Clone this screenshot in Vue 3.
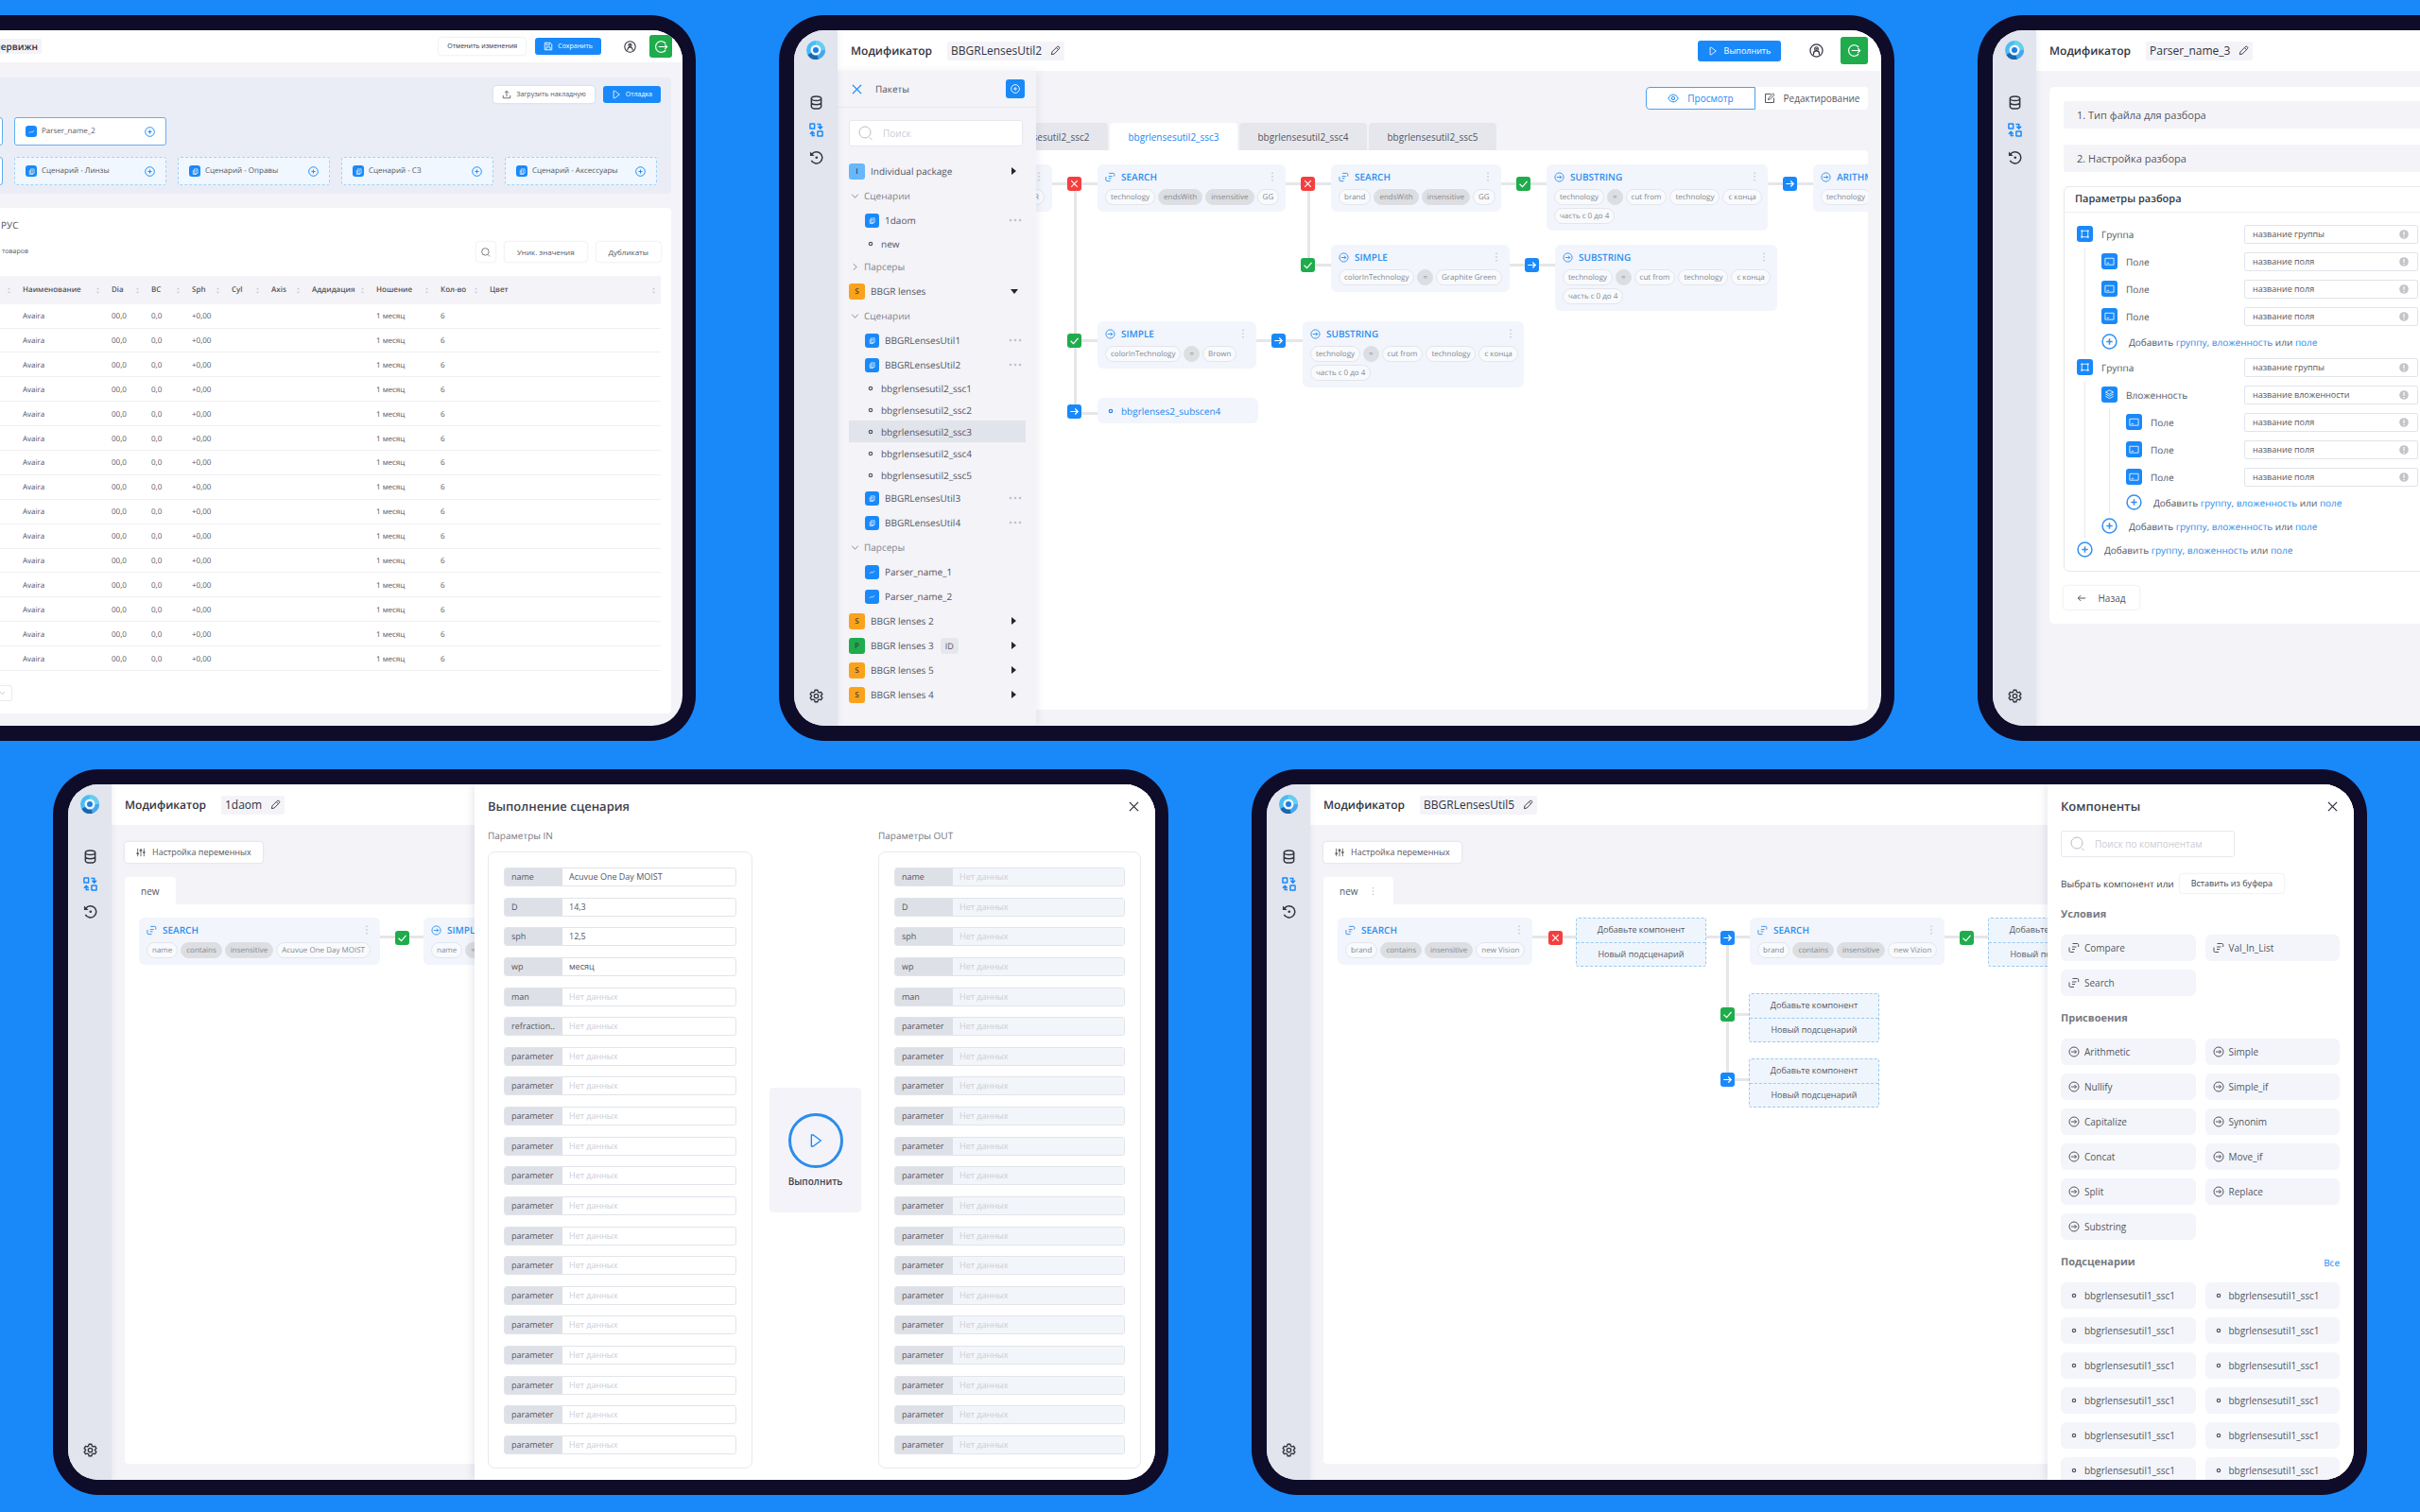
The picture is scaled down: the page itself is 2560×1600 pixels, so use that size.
<script setup>
const rows = [
  [{ id: 'invoice' }, { id: 'packages', name: 'BBGRLensesUtil2' }, { id: 'parser', name: 'Parser_name_3' }],
  [{ id: 'run', name: '1daom' }, { id: 'components', name: 'BBGRLensesUtil5' }],
]

const columns = [
  ['', 'auto'], ['Наименование', 94], ['Dia', 42], ['BC', 43], ['Sph', 42], ['Cyl', 42], ['Axis', 43],
  ['Аддидация', 68], ['Ношение', 68], ['Кол-во', 52], ['Цвет', 188],
]
const record = ['', 'Avaira', '00,0', '0,0', '+0,00', '', '', '', '1 месяц', '6', '']
const scenarioCards = ['Сценарий - Линзы', 'Сценарий - Оправы', 'Сценарий - СЗ', 'Сценарий - Аксессуары']

const tree = [
  { t: 'package', label: 'Individual package', letter: 'I', tone: 'sky' },
  { t: 'group', label: 'Сценарии', open: true },
  { t: 'scenario', label: '1daom', more: true },
  { t: 'sub', label: 'new' },
  { t: 'group', label: 'Парсеры' },
  { t: 'package', label: 'BBGR lenses', letter: 'S', tone: 'amber', open: true },
  { t: 'group', label: 'Сценарии', open: true },
  { t: 'scenario', label: 'BBGRLensesUtil1', more: true },
  { t: 'scenario', label: 'BBGRLensesUtil2', more: true },
  { t: 'sub', label: 'bbgrlensesutil2_ssc1' },
  { t: 'sub', label: 'bbgrlensesutil2_ssc2' },
  { t: 'sub', label: 'bbgrlensesutil2_ssc3', active: true },
  { t: 'sub', label: 'bbgrlensesutil2_ssc4' },
  { t: 'sub', label: 'bbgrlensesutil2_ssc5' },
  { t: 'scenario', label: 'BBGRLensesUtil3', more: true },
  { t: 'scenario', label: 'BBGRLensesUtil4', more: true },
  { t: 'group', label: 'Парсеры', open: true },
  { t: 'parser', label: 'Parser_name_1' },
  { t: 'parser', label: 'Parser_name_2' },
  { t: 'package', label: 'BBGR lenses 2', letter: 'S', tone: 'amber' },
  { t: 'package', label: 'BBGR lenses 3', letter: 'P', tone: 'green', tag: 'ID' },
  { t: 'package', label: 'BBGR lenses 5', letter: 'S', tone: 'amber' },
  { t: 'package', label: 'BBGR lenses 4', letter: 'S', tone: 'amber' },
]

const substring = [['technology', '*=', 'cut from', 'technology', 'с конца'], ['часть с 0 до 4']]
const boards = {
  packages: {
    tabs: [
      { label: 'bbgrlensesutil2_ssc1' },
      { label: 'bbgrlensesutil2_ssc2' },
      { label: 'bbgrlensesutil2_ssc3', active: true },
      { label: 'bbgrlensesutil2_ssc4' },
      { label: 'bbgrlensesutil2_ssc5' },
    ],
    lines: [
      [213, 34, 48, 3], [460, 34, 48, 3], [688, 34, 48, 3], [970, 34, 48, 3],
      [484, 120, 24, 3], [697, 120, 48, 3],
      [237, 200, 24, 3], [429, 200, 49, 3], [237, 277, 24, 3],
      [236, 34, 3, 244], [483, 34, 3, 88],
    ],
    nodes: [
      { x: 14, y: 15, w: 199, kind: 'link', title: 'SEARCH', end: true, pills: [['BBGR']] },
      { x: 261, y: 15, w: 199, kind: 'link', title: 'SEARCH', pills: [['technology', '*endsWith', '*insensitive', 'GG']] },
      { x: 508, y: 15, w: 180, kind: 'link', title: 'SEARCH', pills: [['brand', '*endsWith', '*insensitive', 'GG']] },
      { x: 736, y: 15, w: 234, kind: 'assign', title: 'SUBSTRING', pills: substring },
      { x: 1018, y: 15, w: 199, kind: 'assign', title: 'ARITHMETIC', pills: [['technology']] },
      { x: 508, y: 100, w: 189, kind: 'assign', title: 'SIMPLE', pills: [['colorInTechnology', '*=', 'Graphite Green']] },
      { x: 745, y: 100, w: 235, kind: 'assign', title: 'SUBSTRING', pills: substring },
      { x: 261, y: 181, w: 168, kind: 'assign', title: 'SIMPLE', pills: [['colorInTechnology', '*=', 'Brown']] },
      { x: 478, y: 181, w: 234, kind: 'assign', title: 'SUBSTRING', pills: substring },
    ],
    subs: [{ x: 261, y: 262, w: 170, label: 'bbgrlenses2_subscen4' }],
    slots: [],
    badges: [
      [229, 28, 'cross'], [476, 28, 'cross'], [704, 28, 'check'], [986, 28, 'arrow'],
      [476, 114, 'check'], [713, 114, 'arrow'],
      [229, 194, 'check'], [445, 194, 'arrow'], [229, 269, 'arrow'],
    ],
  },
  run: {
    settings: true,
    tabs: [{ label: 'new', small: true }],
    lines: [[270, 33, 46, 3]],
    nodes: [
      { x: 15, y: 14, w: 255, kind: 'link', title: 'SEARCH', pills: [['name', '*contains', '*insensitive', 'Acuvue One Day MOIST']] },
      { x: 316, y: 14, w: 199, kind: 'assign', title: 'SIMPLE', pills: [['name', '*=']] },
    ],
    subs: [],
    slots: [],
    badges: [[286, 28, 'check']],
  },
  components: {
    settings: true,
    tabs: [{ label: 'new', small: true, menu: true }],
    lines: [
      [221, 33, 46, 3], [405, 33, 46, 3], [657, 33, 46, 3], [427, 115, 23, 3], [427, 184, 23, 3], [426, 34, 3, 152],
    ],
    nodes: [
      { x: 15, y: 14, w: 206, kind: 'link', title: 'SEARCH', pills: [['brand', '*contains', '*insensitive', 'new Vision']] },
      { x: 451, y: 14, w: 206, kind: 'link', title: 'SEARCH', pills: [['brand', '*contains', '*insensitive', 'new Vizion']] },
    ],
    subs: [],
    slots: [[267, 14], [703, 14], [450, 94], [450, 163]],
    badges: [[238, 28, 'cross'], [420, 28, 'arrow'], [673, 28, 'check'], [420, 109, 'check'], [420, 178, 'arrow']],
  },
}

const fields = [
  { level: 0, kind: 'frame', label: 'Группа', value: 'название группы' },
  { level: 1, kind: 'field', label: 'Поле', value: 'название поля' },
  { level: 1, kind: 'field', label: 'Поле', value: 'название поля' },
  { level: 1, kind: 'field', label: 'Поле', value: 'название поля' },
  { level: 1, add: true },
  { level: 0, kind: 'frame', label: 'Группа', value: 'название группы' },
  { level: 1, kind: 'layers', label: 'Вложенность', value: 'название вложенности' },
  { level: 2, kind: 'field', label: 'Поле', value: 'название поля' },
  { level: 2, kind: 'field', label: 'Поле', value: 'название поля' },
  { level: 2, kind: 'field', label: 'Поле', value: 'название поля' },
  { level: 2, add: true },
  { level: 1, add: true },
  { level: 0, add: true },
]

const pad = (list) => [...list, ...Array(20 - list.length).fill(['parameter', ''])]
const paramsIn = pad([
  ['name', 'Acuvue One Day MOIST'], ['D', '14,3'], ['sph', '12,5'], ['wp', 'месяц'], ['man', ''], ['refraction..', ''],
])
const paramsOut = pad([['name', ''], ['D', ''], ['sph', ''], ['wp', ''], ['man', '']])

const library = [
  { title: 'Условия', icon: 'i-link', items: ['Compare', 'Val_In_List', 'Search'] },
  {
    title: 'Присвоения',
    icon: 'i-assign',
    items: ['Arithmetic', 'Simple', 'Nullify', 'Simple_if', 'Capitalize', 'Synonim', 'Concat', 'Move_if', 'Split', 'Replace', 'Substring'],
  },
  { title: 'Подсценарии', icon: 'i-dot', all: true, items: Array(12).fill('bbgrlensesutil1_ssc1') },
]
</script>

<template>
  <svg class="sprite" aria-hidden="true">
    <symbol id="i-logo" viewBox="0 0 20 20">
      <circle cx="10" cy="10" r="7" fill="none" stroke="#4bbcf5" stroke-width="6" />
      <path d="M10 3a7 7 0 0 1 7 7" fill="none" stroke="#63d0ee" stroke-width="6" />
      <path d="M17 10a7 7 0 0 1-6 7" fill="none" stroke="#48a6ee" stroke-width="6" />
      <path d="M12 17a7 7 0 0 1-8-3.500" fill="none" stroke="#1a67ad" stroke-width="6" />
      <circle cx="10" cy="10" r="5.500" fill="#eef6fd" />
      <circle cx="10" cy="10" r="3" fill="#1b7fe0" />
    </symbol>
    <symbol id="i-db" viewBox="0 0 16 16">
      <g fill="none" stroke="currentColor" stroke-width="1.600">
        <ellipse cx="8" cy="3.500" rx="5.500" ry="2.400" />
        <path d="M2.500 3.500v9c0 1.400 2.400 2.500 5.500 2.500s5.500-1.100 5.500-2.500v-9M2.500 8c0 1.300 2.400 2.300 5.500 2.300s5.500-1 5.500-2.300" />
      </g>
    </symbol>
    <symbol id="i-swap" viewBox="0 0 16 16">
      <g fill="none" stroke="currentColor" stroke-width="1.600">
        <rect x="1" y="1" width="5" height="5.500" rx=".5" />
        <rect x="9.500" y="9.500" width="5.500" height="5.500" rx=".5" />
        <path d="M9 1.500h3.500v4M10 4l2.500 2.500L15 4M6.500 14.500H3.500v-4M1 12.500L3.500 10 6 12.500" />
      </g>
    </symbol>
    <symbol id="i-history" viewBox="0 0 16 16">
      <path d="M3 4.500A6.500 6.500 0 1 1 2.500 11.500" fill="none" stroke="currentColor" stroke-width="1.600" />
      <path d="M1 1.500v5h5z" fill="currentColor" />
      <circle cx="8.300" cy="8.300" r="1.400" fill="currentColor" />
    </symbol>
    <symbol id="i-gear" viewBox="0 0 24 24">
      <g fill="none" stroke="currentColor" stroke-width="2.200" stroke-linejoin="round">
        <circle cx="12" cy="12" r="3.500" />
        <path d="M9.800 2h4.400l.7 3 2.100 1.200 3-.9 2.200 3.800L20 11.200v1.600l2.200 2.100-2.200 3.800-3-.9-2.100 1.200-.7 3H9.800l-.7-3L7 17.800l-3 .9-2.200-3.800L4 12.800v-1.600L1.800 9.100 4 5.300l3 .9L9.100 5z" />
      </g>
    </symbol>
    <symbol id="i-pencil" viewBox="0 0 12 12">
      <path d="M1.500 10.500l.6-3L7.800 1.800a1.500 1.500 0 0 1 2.400 2.200L4.500 9.900zM7 2.800l2.200 2.200" fill="none" stroke="currentColor" stroke-linejoin="round" />
    </symbol>
    <symbol id="i-user" viewBox="0 0 16 16">
      <g fill="none" stroke="currentColor" stroke-width="1.300">
        <circle cx="8" cy="8" r="7" />
        <circle cx="8" cy="6" r="2" />
        <path d="M4.800 13v-1.500a3.200 3 0 0 1 6.400 0V13" />
      </g>
      <circle cx="8" cy="6" r="1" fill="currentColor" />
    </symbol>
    <symbol id="i-exit" viewBox="0 0 16 16">
      <path d="M13 4.500A6.200 6.200 0 1 0 13 11.500M5 8h9.500M12 5.500L14.500 8 12 10.500" fill="none" stroke="currentColor" stroke-width="1.300" />
    </symbol>
    <symbol id="i-play" viewBox="0 0 12 12">
      <path d="M2.500 1.500h1.500L10 6l-6 4.500H2.500z" fill="none" stroke="currentColor" stroke-linejoin="round" />
    </symbol>
    <symbol id="i-save" viewBox="0 0 12 12">
      <path d="M1.500 1.500h7l2 2v7h-9zM3.500 1.500v3h4v-3M3.500 10.500v-3.500h5v3.500" fill="none" stroke="currentColor" />
    </symbol>
    <symbol id="i-upload" viewBox="0 0 12 12">
      <path d="M1.500 7v3.500h9V7M6 8.500V1.500M3.500 4L6 1.500 8.500 4" fill="none" stroke="currentColor" />
    </symbol>
    <symbol id="i-plus" viewBox="0 0 16 16">
      <path d="M8 5v6M5 8h6M15 8A7 7 0 1 1 1 8a7 7 0 0 1 14 0z" fill="none" stroke="currentColor" stroke-width="1.400" />
    </symbol>
    <symbol id="i-copy" viewBox="0 0 12 12">
      <path d="M4.500 2.500h5v6h-5zM3 4v6h5M6 4.500h2M6 6.500h2" fill="none" stroke="currentColor" />
    </symbol>
    <symbol id="i-wave" viewBox="0 0 12 12">
      <path d="M2.500 8L5 5.500l1.500 1.500L9.500 4" fill="none" stroke="currentColor" />
    </symbol>
    <symbol id="i-search" viewBox="0 0 16 16">
      <path d="M13 7A6 6 0 1 1 1 7a6 6 0 0 1 12 0zM12 12.500l2.500 2.500" fill="none" stroke="currentColor" />
    </symbol>
    <symbol id="i-sort" viewBox="0 0 6 10">
      <path d="M1 3.500l2-2 2 2zM1 6.500l2 2 2-2z" fill="currentColor" />
    </symbol>
    <symbol id="i-down" viewBox="0 0 10 10">
      <path d="M1.500 3L5 7l3.500-4" fill="none" stroke="currentColor" />
    </symbol>
    <symbol id="i-right" viewBox="0 0 10 10">
      <path d="M3 1.500L7 5 3 8.500" fill="none" stroke="currentColor" />
    </symbol>
    <symbol id="i-close" viewBox="0 0 12 12">
      <path d="M1 1l10 10M11 1L1 11" fill="none" stroke="currentColor" stroke-width="1.400" />
    </symbol>
    <symbol id="i-eye" viewBox="0 0 12 12">
      <path d="M.8 6c1.200-2.500 3-3.800 5.200-3.800S10 3.500 11.200 6C10 8.500 8.200 9.800 6 9.800S2 8.500.8 6z" fill="none" stroke="currentColor" />
      <circle cx="6" cy="6" r="1.700" fill="none" stroke="currentColor" />
    </symbol>
    <symbol id="i-edit" viewBox="0 0 12 12">
      <path d="M7.500 1.500h-6v9h9v-5M4.500 7.500l.4-1.800L9.600 1l1.400 1.400L6.300 7.100z" fill="none" stroke="currentColor" />
    </symbol>
    <symbol id="i-link" viewBox="0 0 12 12">
      <path d="M4.500 1.500h5a1.200 1.200 0 0 1 1.200 1.200V5M1 5.500v3.800a1.200 1.200 0 0 0 1.200 1.200H6M4 5h4.500M4 7.500h3" fill="none" stroke="currentColor" />
    </symbol>
    <symbol id="i-assign" viewBox="0 0 12 12">
      <path d="M11 6A5 5 0 1 1 1 6a5 5 0 0 1 10 0zM3 6h5.500M6.500 4l2 2-2 2" fill="none" stroke="currentColor" />
    </symbol>
    <symbol id="i-dot" viewBox="0 0 12 12">
      <circle cx="6" cy="6" r="1.700" fill="none" stroke="currentColor" stroke-width="1.200" />
    </symbol>
    <symbol id="i-cross" viewBox="0 0 16 16">
      <path d="M4.500 4.500l7 7M11.500 4.500l-7 7" fill="none" stroke="currentColor" stroke-width="1.200" />
    </symbol>
    <symbol id="i-check" viewBox="0 0 16 16">
      <path d="M3.800 8.300L7 11.300l5.300-6" fill="none" stroke="currentColor" stroke-width="1.300" />
    </symbol>
    <symbol id="i-arrow" viewBox="0 0 16 16">
      <path d="M3.500 8h8.500M8.800 4.800L12 8l-3.200 3.200" fill="none" stroke="currentColor" stroke-width="1.300" />
    </symbol>
    <symbol id="i-back" viewBox="0 0 12 12">
      <path d="M11 6H1.500M5 2.500L1.500 6 5 9.500" fill="none" stroke="currentColor" stroke-width="1.200" />
    </symbol>
    <symbol id="i-frame" viewBox="0 0 12 12">
      <path d="M2.500 2.500h7v7h-7z" fill="none" stroke="currentColor" />
      <path d="M1.500 1.500h2v2h-2zM8.500 1.500h2v2h-2zM1.500 8.500h2v2h-2zM8.500 8.500h2v2h-2z" fill="currentColor" />
    </symbol>
    <symbol id="i-field" viewBox="0 0 12 12">
      <path d="M1 2.500h10v7.500H1zM3 8h2.500" fill="none" stroke="currentColor" />
    </symbol>
    <symbol id="i-layers" viewBox="0 0 12 12">
      <path d="M6 1l4.500 2.300L6 5.600 1.500 3.300zM1.500 5.500L6 7.800l4.500-2.300M1.500 8L6 10.500 10.500 8" fill="none" stroke="currentColor" />
    </symbol>
    <symbol id="i-sliders" viewBox="0 0 12 12">
      <path d="M2 1v10M6 1v10M10 1v10" fill="none" stroke="currentColor" />
      <path d="M.5 6.500h3v2h-3zM4.500 2.500h3v2h-3zM8.500 5h3v2h-3z" fill="currentColor" />
    </symbol>
    <symbol id="i-info" viewBox="0 0 10 10">
      <circle cx="5" cy="5" r="4.800" fill="#c2c4c8" />
      <path d="M5 2v4M5 7v1.200" stroke="#fff" stroke-width="1.200" />
    </symbol>
    <symbol id="i-more" viewBox="0 0 14 4">
      <circle cx="2" cy="2" r="1.300" fill="currentColor" /><circle cx="7" cy="2" r="1.300" fill="currentColor" /><circle cx="12" cy="2" r="1.300" fill="currentColor" />
    </symbol>
    <symbol id="i-kebab" viewBox="0 0 4 12">
      <circle cx="2" cy="1.500" r=".9" fill="currentColor" /><circle cx="2" cy="6" r=".9" fill="currentColor" /><circle cx="2" cy="10.500" r=".9" fill="currentColor" />
    </symbol>
  </svg>

  <main class="page">
    <div v-for="(row, r) in rows" :key="r" class="row" :class="r ? 'row-lower' : 'row-upper'">
      <article v-for="s in row" :key="s.id" class="device">
        <div class="screen" :class="'screen-' + s.id">
          <aside class="rail">
            <svg class="logo"><use href="#i-logo" /></svg>
            <nav class="rail-nav">
              <a href="#" aria-label="data"><svg><use href="#i-db" /></svg></a>
              <a href="#" class="on" aria-label="modifier"><svg><use href="#i-swap" /></svg></a>
              <a href="#" aria-label="history"><svg><use href="#i-history" /></svg></a>
            </nav>
            <a href="#" class="rail-gear" aria-label="settings"><svg><use href="#i-gear" /></svg></a>
          </aside>

          <section class="body">
            <header v-if="s.id === 'invoice'" class="top top-compact">
              <div class="top-name"><span class="tag">Купервижн</span></div>
              <button class="btn">Отменить изменения</button>
              <button class="btn primary"><svg><use href="#i-save" /></svg>Сохранить</button>
              <button class="user" aria-label="profile"><svg><use href="#i-user" /></svg></button>
              <button class="exit" aria-label="exit"><svg><use href="#i-exit" /></svg></button>
            </header>
            <header v-else class="top">
              <h1>Модификатор</h1>
              <button class="tag">{{ s.name }}<svg><use href="#i-pencil" /></svg></button>
              <template v-if="s.id === 'packages'">
                <button class="btn primary run-btn"><svg><use href="#i-play" /></svg>Выполнить</button>
                <button class="user" aria-label="profile"><svg><use href="#i-user" /></svg></button>
                <button class="exit" aria-label="exit"><svg><use href="#i-exit" /></svg></button>
              </template>
            </header>

            <div v-if="s.id === 'invoice'" class="invoice">
              <section class="chain">
                <div class="chain-tools">
                  <button class="btn"><svg><use href="#i-upload" /></svg>Загрузить накладную</button>
                  <button class="btn primary"><svg><use href="#i-play" /></svg>Отладка</button>
                </div>
                <div class="cards">
                  <div class="card"></div>
                  <div class="card">
                    <span class="chip"><svg><use href="#i-wave" /></svg></span>Parser_name_2
                    <button aria-label="add"><svg><use href="#i-plus" /></svg></button>
                  </div>
                </div>
                <div class="cards">
                  <div class="card"></div>
                  <div v-for="c in scenarioCards" :key="c" class="card dashed">
                    <span class="chip"><svg><use href="#i-copy" /></svg></span>{{ c }}
                    <button aria-label="add"><svg><use href="#i-plus" /></svg></button>
                  </div>
                </div>
              </section>
              <section class="sheet">
                <h2>РУС</h2>
                <div class="sheet-tools">
                  <p>товаров</p>
                  <button class="btn find" aria-label="search"><svg><use href="#i-search" /></svg></button>
                  <button class="btn">Уник. значения</button>
                  <button class="btn">Дубликаты</button>
                </div>
                <table>
                  <colgroup>
                    <col v-for="c in columns" :key="c[0]" :style="{ width: c[1] === 'auto' ? 'auto' : c[1] + 'px' }" />
                  </colgroup>
                  <thead>
                    <tr>
                      <th v-for="c in columns" :key="c[0]"><div>{{ c[0] }}<svg><use href="#i-sort" /></svg></div></th>
                    </tr>
                  </thead>
                  <tbody>
                    <tr v-for="n in 15" :key="n"><td v-for="(v, i) in record" :key="i">{{ v }}</td></tr>
                  </tbody>
                </table>
                <div class="pager">
                  <select aria-label="rows"><option>15</option></select>
                  <svg><use href="#i-down" /></svg>
                </div>
              </section>
            </div>

            <div v-else-if="s.id === 'parser'" class="parser">
              <section class="form">
                <button class="step">1. Тип файла для разбора</button>
                <button class="step step-open">2. Настройка разбора</button>
                <div class="params">
                  <h2>Параметры разбора</h2>
                  <div class="param-rows">
                    <div v-for="(f, i) in fields" :key="i" class="param" :class="{ add: f.add }">
                      <div class="param-name">
                        <i v-for="g in f.level" :key="g" class="guide"></i>
                        <template v-if="f.add">
                          <svg class="add-icon"><use href="#i-plus" /></svg>
                          <p>Добавить <a href="#">группу,</a> <a href="#">вложенность</a> или <a href="#">поле</a></p>
                        </template>
                        <template v-else>
                          <span class="chip"><svg><use :href="'#i-' + f.kind" /></svg></span>
                          <label :for="'field-' + i">{{ f.label }}</label>
                        </template>
                      </div>
                      <div v-if="!f.add" class="param-input">
                        <input :id="'field-' + i" type="text" :value="f.value" />
                        <svg><use href="#i-info" /></svg>
                      </div>
                    </div>
                  </div>
                </div>
                <button class="btn back"><svg><use href="#i-back" /></svg>Назад</button>
              </section>
            </div>

            <div v-else class="work">
              <div class="toolbar">
                <button v-if="boards[s.id].settings" class="btn"><svg><use href="#i-sliders" /></svg>Настройка переменных</button>
                <div v-else class="toggle">
                  <button class="on"><svg><use href="#i-eye" /></svg>Просмотр</button>
                  <button><svg><use href="#i-edit" /></svg>Редактирование</button>
                </div>
              </div>
              <div class="tabs">
                <button v-for="t in boards[s.id].tabs" :key="t.label" class="tab" :class="{ active: t.active, small: t.small }">
                  {{ t.label }}<svg v-if="t.menu"><use href="#i-kebab" /></svg>
                </button>
              </div>
              <div class="board">
                <i
                  v-for="(l, i) in boards[s.id].lines" :key="'l' + i" class="line"
                  :style="{ left: l[0] + 'px', top: l[1] + 'px', width: l[2] + 'px', height: l[3] + 'px' }"
                ></i>
                <div
                  v-for="(n, i) in boards[s.id].nodes" :key="'n' + i" class="node"
                  :style="{ left: n.x + 'px', top: n.y + 'px', width: n.w + 'px' }"
                >
                  <h3><svg class="node-icon"><use :href="'#i-' + n.kind" /></svg>{{ n.title }}<svg class="kebab"><use href="#i-kebab" /></svg></h3>
                  <div v-for="(p, j) in n.pills" :key="j" class="pills" :class="{ end: n.end }">
                    <span v-for="(x, k) in p" :key="k" class="pill" :class="{ op: x[0] === '*' }">{{ x.replace('*', '') }}</span>
                  </div>
                </div>
                <a
                  v-for="n in boards[s.id].subs" :key="n.label" href="#" class="node sub-node"
                  :style="{ left: n.x + 'px', top: n.y + 'px', width: n.w + 'px' }"
                ><svg><use href="#i-dot" /></svg>{{ n.label }}</a>
                <div
                  v-for="(p, i) in boards[s.id].slots" :key="'s' + i" class="slot"
                  :style="{ left: p[0] + 'px', top: p[1] + 'px' }"
                >
                  <button>Добавьте компонент</button>
                  <button>Новый подсценарий</button>
                </div>
                <span
                  v-for="(b, i) in boards[s.id].badges" :key="'b' + i" class="badge" :class="b[2]"
                  :style="{ left: b[0] + 'px', top: b[1] + 'px' }"
                ><svg><use :href="'#i-' + b[2]" /></svg></span>
              </div>
            </div>
          </section>

          <aside v-if="s.id === 'packages'" class="packages">
            <div class="packages-head">
              <button class="close" aria-label="close"><svg><use href="#i-close" /></svg></button>
              <h2>Пакеты</h2>
              <button class="add-package" aria-label="add"><svg><use href="#i-plus" /></svg></button>
            </div>
            <div class="search">
              <svg><use href="#i-search" /></svg>
              <input type="search" placeholder="Поиск" aria-label="Поиск" />
            </div>
            <ul class="tree">
              <li v-for="(n, i) in tree" :key="i">
                <a href="#" :class="[n.t, { active: n.active }]">
                  <span v-if="n.t === 'package'" class="letter" :class="n.tone">{{ n.letter }}</span>
                  <svg v-else-if="n.t === 'group'" class="mark"><use :href="n.open ? '#i-down' : '#i-right'" /></svg>
                  <svg v-else-if="n.t === 'sub'" class="bullet"><use href="#i-dot" /></svg>
                  <span v-else class="chip"><svg><use :href="n.t === 'parser' ? '#i-wave' : '#i-copy'" /></svg></span>
                  <span>{{ n.label }}</span>
                  <em v-if="n.tag">{{ n.tag }}</em>
                  <i v-if="n.t === 'package'" class="caret" :class="{ open: n.open }"></i>
                  <svg v-if="n.more" class="more"><use href="#i-more" /></svg>
                </a>
              </li>
            </ul>
          </aside>

          <aside v-if="s.id === 'run'" class="drawer run">
            <div class="drawer-head">
              <h2>Выполнение сценария</h2>
              <button class="close" aria-label="close"><svg><use href="#i-close" /></svg></button>
            </div>
            <div class="run-grid">
              <section class="io">
                <h3>Параметры IN</h3>
                <div class="io-box">
                  <div v-for="(p, i) in paramsIn" :key="i" class="io-row">
                    <label :for="'in-' + i">{{ p[0] }}</label>
                    <input :id="'in-' + i" type="text" :value="p[1]" placeholder="Нет данных" />
                  </div>
                </div>
              </section>
              <button class="launch">
                <span><svg><use href="#i-play" /></svg></span>Выполнить
              </button>
              <section class="io out">
                <h3>Параметры OUT</h3>
                <div class="io-box">
                  <div v-for="(p, i) in paramsOut" :key="i" class="io-row">
                    <label :for="'out-' + i">{{ p[0] }}</label>
                    <input :id="'out-' + i" type="text" readonly placeholder="Нет данных" />
                  </div>
                </div>
              </section>
            </div>
          </aside>

          <aside v-if="s.id === 'components'" class="drawer library">
            <div class="drawer-head">
              <h2>Компоненты</h2>
              <button class="close" aria-label="close"><svg><use href="#i-close" /></svg></button>
            </div>
            <div class="search">
              <svg><use href="#i-search" /></svg>
              <input type="search" placeholder="Поиск по компонентам" aria-label="Поиск по компонентам" />
            </div>
            <div class="paste">Выбрать компонент или<button class="btn">Вставить из буфера</button></div>
            <section v-for="g in library" :key="g.title">
              <h3>{{ g.title }}<a v-if="g.all" href="#">Все</a></h3>
              <div class="lib-grid">
                <button v-for="(x, i) in g.items" :key="i"><svg><use :href="'#' + g.icon" /></svg>{{ x }}</button>
              </div>
            </section>
          </aside>
        </div>
      </article>
    </div>
  </main>
</template>

<style>
html,
body {
  background: #1989fa;
}
</style>

<style scoped>
* {
  box-sizing: border-box;
}
.sprite {
  position: absolute;
  width: 0;
  height: 0;
}
.page {
  padding: 16px 0;
  overflow: hidden;
  background: #1989fa;
  color: #54565f;
  font-family: "Open Sans", "Noto Sans", sans-serif;
  font-size: 10px;
  line-height: 14px;
  text-rendering: geometricPrecision;
}
h1, h2, h3, p, ul {
  margin: 0;
  padding: 0;
}
button, input, select {
  margin: 0;
  padding: 0;
  border: 0;
  background: none;
  color: inherit;
  font: inherit;
  white-space: nowrap;
}
input {
  min-width: 0;
  outline: 0;
}
input::placeholder {
  color: #cccdd2;
  opacity: 1;
}
a {
  color: inherit;
  text-decoration: none;
}
svg {
  display: block;
  flex: none;
}

.row {
  display: grid;
  gap: 88px;
}
.row-upper {
  grid-template-columns: repeat(3, minmax(0, 1fr));
  margin: 0 -712px 30px -444px;
}
.row-lower {
  grid-template-columns: repeat(2, minmax(0, 1fr));
  margin: 0 56px;
}
.device {
  aspect-ratio: 1180 / 768;
  min-height: 0;
  padding: 16px 14px 16px 16px;
  overflow: hidden;
  border-radius: 48px;
  background: #0f0c29;
}
.screen {
  position: relative;
  display: flex;
  height: 100%;
  overflow: hidden;
  border-radius: 32px;
  background: #f3f3f8;
}

.rail {
  z-index: 3;
  display: flex;
  flex: none;
  flex-direction: column;
  align-items: center;
  width: 46px;
  padding: 11px 0 24px;
  background: #e2e5ed;
  box-shadow: 1px 0 6px rgba(60, 70, 110, 0.08);
  color: #333542;
}
.logo {
  width: 20px;
  height: 20px;
}
.rail-nav {
  display: flex;
  flex-direction: column;
  gap: 14px;
  margin-top: 38px;
}
.rail a svg {
  width: 15px;
  height: 15px;
}
.rail .on {
  color: #1989fa;
}
.rail-gear {
  margin-top: auto;
}

.body {
  display: flex;
  flex: 1;
  flex-direction: column;
  min-width: 0;
}
.top {
  display: flex;
  flex: none;
  align-items: center;
  height: 43px;
  padding: 0 14px;
  background: #fff;
  color: #30323f;
}
.top h1 {
  margin-right: 16px;
  font-size: 12px;
  font-weight: 600;
}
.tag {
  display: flex;
  align-items: center;
  gap: 9px;
  height: 20px;
  padding: 0 4px;
  border-radius: 2px;
  background: #f4f4f8;
  font-size: 12px;
}
.tag svg {
  width: 11px;
  height: 11px;
}
.btn {
  display: flex;
  align-items: center;
  justify-content: center;
  gap: 7px;
  height: 22px;
  padding: 0 12px;
  border-radius: 3px;
  background: #fff;
  box-shadow: 0 0 2px rgba(50, 55, 90, 0.22);
  font-size: 9px;
}
.btn svg {
  width: 10px;
  height: 10px;
}
.primary {
  background: #1989fa;
  box-shadow: none;
  color: #fff;
}
.run-btn {
  width: 88px;
  margin-left: auto;
}
.user svg {
  width: 15px;
  height: 15px;
  margin: 0 18px 0 30px;
}
.exit {
  display: flex;
  align-items: center;
  justify-content: center;
  width: 29px;
  height: 29px;
  border-radius: 3px;
  background: #1fac4c;
  color: #fff;
}
.exit svg {
  width: 15px;
  height: 15px;
}
.chip {
  display: flex;
  flex: none;
  align-items: center;
  justify-content: center;
  border-radius: 3px;
  background: #1989fa;
  color: #e4f2ff;
}

.top-compact {
  height: 34px;
  padding-right: 11px;
}
.top-compact .top-name {
  display: flex;
  justify-content: flex-end;
  width: 412px;
  margin-right: auto;
}
.top-compact .tag {
  height: 16px;
  font-size: 10px;
  font-weight: 600;
}
.top-compact .btn,
.chain-tools .btn {
  gap: 5px;
  height: 18px;
  padding: 0 9px;
  margin-right: 10px;
  font-size: 7px;
}
.top-compact .user svg {
  width: 13px;
  height: 13px;
  margin: 0 14px;
}
.top-compact .exit {
  width: 24px;
  height: 24px;
}
.invoice {
  display: flex;
  flex: 1;
  flex-direction: column;
  gap: 15px;
  padding: 16px 12px 13px;
  font-size: 8px;
}
.chain {
  display: flex;
  flex-direction: column;
  gap: 12px;
  padding: 9px 15px 9px 0;
  border-radius: 4px;
  background: #eaedf6;
}
.chain-tools {
  display: flex;
  gap: 9px;
  justify-content: flex-end;
  margin: 0 -4px 3px 0;
}
.chain-tools .btn {
  margin-right: 0;
}
.cards {
  display: grid;
  grid-template-columns: repeat(5, 161px);
  gap: 12px;
  justify-content: end;
}
.card {
  display: flex;
  align-items: center;
  gap: 5px;
  height: 30px;
  padding: 0 11px;
  border: 1px solid #62aef0;
  border-radius: 3px;
  background: #fff;
}
.card.dashed {
  border-style: dashed;
  border-color: #a3d2f5;
  background: #f0f7fe;
}
.card .chip {
  width: 12px;
  height: 12px;
}
.card .chip svg,
.tree .chip svg {
  width: 9px;
  height: 9px;
}
.card button {
  margin-left: auto;
  color: #1989fa;
}
.card button svg {
  width: 11px;
  height: 11px;
}
.sheet {
  flex: 1;
  padding: 8px 11px 13px;
  border-radius: 4px;
  background: #fff;
}
.sheet h2 {
  padding-left: 360px;
  font-size: 10px;
  font-weight: 400;
  line-height: 20px;
}
.sheet-tools {
  display: flex;
  gap: 10px;
  align-items: center;
  margin: 8px 0 15px;
}
.sheet-tools p {
  margin-right: auto;
  padding-left: 361px;
  font-size: 7px;
}
.sheet-tools .btn {
  height: 21px;
  padding: 0 13px;
  font-size: 8px;
}
.sheet-tools .find {
  padding: 0 5px;
  color: #30323f;
}
table {
  width: 100%;
  height: 418px;
  border-collapse: collapse;
  table-layout: fixed;
}
th {
  height: 30px;
  padding: 0 5px 0 7px;
  background: #f4f4f8;
  color: #54565f;
  font-weight: 600;
  line-height: 12px;
  white-space: nowrap;
}
th div {
  display: flex;
  align-items: center;
  justify-content: space-between;
}
th svg {
  width: 5px;
  height: 9px;
  margin-left: auto;
  color: #c6c8ce;
}
td {
  padding: 2px 7px 0;
  border-bottom: 1px solid #f0f0f3;
  line-height: 12px;
}
.pager {
  position: relative;
  width: 372px;
  margin-top: 15px;
}
.pager select {
  display: block;
  width: 60px;
  height: 17px;
  margin-left: auto;
  padding-left: 6px;
  border: 1px solid #ececf0;
  border-radius: 2px;
  appearance: none;
}
.pager svg {
  position: absolute;
  top: 5px;
  right: 7px;
  width: 7px;
  height: 7px;
  color: #b5b7bd;
}

.parser {
  padding: 17px 14px;
}
.form {
  padding: 15px;
  border-radius: 5px;
  background: #fff;
}
.step {
  display: block;
  width: 100%;
  height: 29px;
  margin-bottom: 17px;
  padding: 0 14px;
  border-radius: 3px;
  background: #f4f4f8;
  font-size: 11px;
  text-align: left;
}
.step-open {
  margin-bottom: 15px;
}
.params {
  margin-bottom: 15px;
  border: 1px solid #e6e8ee;
  border-radius: 6px;
}
.params h2 {
  padding: 0 11px;
  border-bottom: 1px solid #eeeff3;
  color: #363846;
  font-size: 11px;
  font-weight: 600;
  line-height: 26px;
}
.param-rows {
  padding: 8px 13px 10px;
}
.param {
  display: grid;
  grid-template-columns: 177px 184px;
  align-items: center;
  height: 29px;
}
.param.add {
  grid-template-columns: auto;
  height: 25px;
}
.param-name {
  display: flex;
  align-items: center;
  height: 100%;
  white-space: nowrap;
}
.guide {
  flex: none;
  align-self: stretch;
  width: 18px;
  margin-left: 8px;
  border-left: 1px solid #e9eaf0;
}
.param .chip {
  width: 17px;
  height: 17px;
  margin-right: 9px;
}
.param .chip svg {
  width: 11px;
  height: 11px;
}
.add-icon {
  width: 17px;
  height: 17px;
  margin-right: 12px;
  color: #3390ee;
}
.param a {
  color: #2c8ceb;
}
.param-input {
  position: relative;
}
.param-input input {
  width: 100%;
  height: 20px;
  padding: 0 24px 0 8px;
  border: 1px solid #e2e4ea;
  border-radius: 2px;
  font-size: 9px;
}
.param-input svg {
  position: absolute;
  top: 5px;
  right: 10px;
  width: 10px;
  height: 10px;
}
.back {
  gap: 12px;
  width: 80px;
  height: 25px;
  font-size: 10px;
}

.work {
  display: flex;
  flex: 1;
  flex-direction: column;
  min-height: 0;
  padding: 0 14px 17px;
}
.toolbar {
  display: flex;
  align-items: center;
  height: 55px;
  padding-top: 2px;
}
.toggle {
  display: flex;
  height: 24px;
  margin-left: auto;
  border-radius: 4px;
  background: #fff;
}
.toggle button {
  display: flex;
  align-items: center;
  justify-content: center;
  gap: 9px;
  width: 119px;
}
.toggle .on {
  width: 116px;
  border: 1px solid #4da0ee;
  border-radius: 4px 0 0 4px;
  color: #1989fa;
}
.toggle svg {
  width: 12px;
  height: 12px;
}
.tabs {
  display: flex;
  gap: 2px;
}
.tab {
  display: flex;
  flex: none;
  align-items: center;
  justify-content: center;
  gap: 14px;
  min-width: 135px;
  height: 29px;
  padding: 0 17px;
  border-radius: 4px 4px 0 0;
  background: #e6e7ed;
}
.tab.small {
  min-width: 0;
  background: #fff;
}
.tab.active {
  background: #fff;
  color: #1989fa;
}
.tab svg {
  width: 3px;
  height: 10px;
  margin-right: 3px;
  color: #b5b8c0;
}
.board {
  position: relative;
  flex: 1;
  overflow: hidden;
  border-radius: 0 4px 4px 4px;
  background: #fff;
}
.line {
  position: absolute;
  background: #e5e6e9;
}
.node {
  position: absolute;
  padding: 6px 8px 7px;
  border-radius: 6px;
  background: #f2f5fb;
  white-space: nowrap;
}
.node h3 {
  display: flex;
  align-items: center;
  margin-bottom: 6px;
  color: #2c8ff0;
  font-size: 10px;
  font-weight: 600;
}
.node-icon {
  width: 11px;
  height: 11px;
  margin-right: 6px;
}
.kebab {
  width: 4px;
  height: 10px;
  margin: 0 4px 0 auto;
  color: #b4b8c2;
}
.pills {
  display: flex;
  gap: 3px;
}
.pills.end {
  justify-content: flex-end;
}
.pills + .pills {
  margin-top: 3px;
}
.pill {
  height: 17px;
  padding: 0 5px;
  border: 1px solid #e3e5ea;
  border-radius: 9px;
  background: #f8fafd;
  color: #868991;
  font-size: 8px;
  line-height: 15px;
}
.pill.op {
  border-color: #dcdee2;
  background: #dcdee2;
}
.sub-node {
  display: flex;
  align-items: center;
  gap: 5px;
  height: 27px;
  padding: 0 8px;
  color: #1e86ee;
}
.sub-node svg,
.lib-grid svg {
  width: 12px;
  height: 12px;
}
.slot {
  position: absolute;
  display: flex;
  flex-direction: column;
  width: 138px;
  height: 52px;
  border: 1px dashed #9ccbf0;
  border-radius: 3px;
  background: #eff5fc;
}
.slot button {
  flex: 1;
  font-size: 9px;
}
.slot button + button {
  border-top: 1px dashed #9ccbf0;
}
.badge {
  position: absolute;
  width: 15px;
  height: 15px;
  border-radius: 3px;
  background: #1989fa;
  color: #fff;
}
.badge svg {
  width: 15px;
  height: 15px;
}
.badge.cross {
  background: #f43f40;
}
.badge.check {
  background: #1fac4c;
}

.packages {
  position: absolute;
  top: 43px;
  bottom: 0;
  left: 46px;
  z-index: 2;
  width: 210px;
  background: #f3f3f8;
  box-shadow: 2px 0 8px rgba(60, 70, 110, 0.08);
}
.packages-head {
  display: flex;
  align-items: center;
  height: 39px;
  padding: 0 12px 0 15px;
  border-bottom: 1px solid #e9eaf0;
}
.packages-head h2 {
  margin-left: 14px;
  font-size: 10px;
  font-weight: 400;
}
.close svg {
  width: 11px;
  height: 11px;
  color: #30323f;
}
.packages .close svg {
  color: #1989fa;
}
.add-package {
  display: flex;
  align-items: center;
  justify-content: center;
  width: 20px;
  height: 20px;
  margin-left: auto;
  border-radius: 3px;
  background: #1989fa;
  color: #fff;
}
.add-package svg {
  width: 10px;
  height: 10px;
}
.search {
  display: flex;
  align-items: center;
  gap: 10px;
  width: 184px;
  height: 28px;
  padding: 0 9px;
  border: 1px solid #e7e8ee;
  border-radius: 3px;
  background: #fff;
}
.search svg {
  width: 16px;
  height: 16px;
  color: #b9bbc1;
}
.search input {
  flex: 1;
}
.packages .search {
  margin: 13px 12px;
}
.tree {
  padding: 0 11px 0 12px;
  list-style: none;
}
.tree a {
  display: flex;
  align-items: center;
  height: 26px;
}
.tree .sub {
  height: 23px;
  padding-left: 17px;
}
.tree .sub.active {
  background: #e2e4eb;
}
.tree .scenario,
.tree .parser {
  padding: 0 0 0 17px;
}
.tree .group {
  padding-left: 2px;
  color: #83858d;
}
.letter {
  width: 17px;
  height: 17px;
  margin-right: 6px;
  border-radius: 3px;
  color: #3a3c46;
  font-size: 8px;
  font-weight: 600;
  line-height: 17px;
  text-align: center;
}
.sky {
  background: #66b8fb;
}
.amber {
  background: #faa21b;
}
.green {
  background: #1fac4c;
}
.mark {
  width: 9px;
  height: 9px;
  margin-right: 5px;
}
.bullet {
  width: 12px;
  height: 12px;
  margin-right: 5px;
}
.tree .chip {
  width: 15px;
  height: 15px;
  margin-right: 6px;
}
.tree em {
  margin-left: 7px;
  padding: 0 5px;
  border-radius: 4px;
  background: #e6e7ed;
  font-size: 9px;
  font-style: normal;
  line-height: 17px;
}
.caret {
  margin: 0 10px 0 auto;
  border: solid transparent;
  border-width: 4px 0 4px 5px;
  border-left-color: #24262e;
}
.caret.open {
  margin-right: 8px;
  border-width: 5px 4px 0;
  border-color: #24262e transparent transparent;
}
.more {
  width: 14px;
  height: 4px;
  margin: 0 4px 0 auto;
  color: #c0c2ca;
}

.drawer {
  position: absolute;
  top: 0;
  right: 0;
  bottom: 0;
  z-index: 4;
  display: flex;
  flex-direction: column;
  padding: 13px 15px 12px 14px;
  background: #fff;
  box-shadow: -2px 0 8px rgba(60, 70, 110, 0.12);
}
.drawer-head {
  display: flex;
  flex: none;
  align-items: center;
  justify-content: space-between;
  height: 20px;
  padding-right: 2px;
  color: #40424f;
}
.drawer-head h2 {
  font-size: 13px;
  font-weight: 600;
}
.run {
  width: 720px;
}
.run-grid {
  display: grid;
  flex: 1;
  grid-template-columns: 280px 1fr 278px;
  min-height: 0;
  margin-top: 14px;
}
.io {
  display: flex;
  flex-direction: column;
}
.io h3 {
  margin-bottom: 10px;
  color: #777982;
  font-size: 10px;
  font-weight: 400;
}
.io-box {
  display: flex;
  flex: 1;
  flex-direction: column;
  justify-content: space-between;
  padding: 16px 16px 14px;
  border: 1px solid #e8e9ee;
  border-radius: 8px;
}
.io-row {
  display: flex;
  height: 20px;
  border: 1px solid #e2e4ea;
  border-radius: 3px;
  font-size: 9px;
  overflow: hidden;
}
.io-row label {
  min-width: 61px;
  padding: 0 7px;
  background: #dee0e7;
  line-height: 18px;
}
.io-row input {
  flex: 1;
  padding: 0 7px;
}
.out input {
  background: #f2f5fa;
}
.launch {
  display: flex;
  flex-direction: column;
  gap: 7px;
  align-items: center;
  justify-content: center;
  align-self: center;
  justify-self: center;
  width: 97px;
  height: 132px;
  margin-top: 2px;
  padding-top: 2px;
  border-radius: 4px;
  background: #f3f3f9;
  color: #40424f;
  font-weight: 600;
}
.launch span {
  display: flex;
  align-items: center;
  justify-content: center;
  width: 58px;
  height: 58px;
  border: 3px solid #2b8deb;
  border-radius: 50%;
  color: #1989fa;
}
.launch svg {
  width: 16px;
  height: 16px;
}

.library {
  width: 324px;
  overflow: hidden;
}
.library .search {
  flex: none;
  margin-top: 16px;
}
.paste {
  display: flex;
  gap: 6px;
  align-items: center;
  margin: 18px 0 13px;
  color: #44464f;
}
.paste .btn {
  height: 20px;
}
.library h3 {
  display: flex;
  align-items: center;
  justify-content: space-between;
  height: 20px;
  margin-bottom: 11px;
  color: #777982;
  font-size: 11px;
  font-weight: 700;
}
.library h3 a {
  color: #1989fa;
  font-size: 10px;
  font-weight: 400;
}
.lib-grid {
  display: grid;
  grid-template-columns: 1fr 1fr;
  gap: 9px 10px;
  margin-bottom: 14px;
}
.lib-grid button {
  display: flex;
  align-items: center;
  gap: 5px;
  height: 28px;
  padding: 0 8px;
  border-radius: 6px;
  background: #f3f5fa;
}
</style>
